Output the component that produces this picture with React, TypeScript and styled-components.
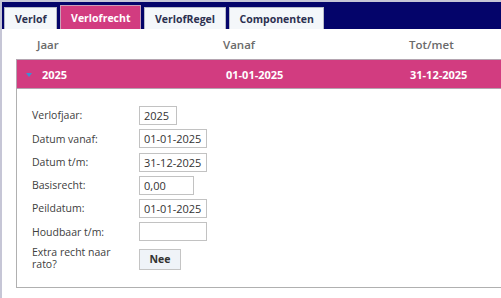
import React from "react";
import styled, { createGlobalStyle } from "styled-components";

const Global = createGlobalStyle`
  html, body { margin: 0; padding: 0; background: #ffffff; }
  body { font-family: "Open Sans", "Liberation Sans", sans-serif; }
  * { box-sizing: border-box; }
`;

const Frame = styled.div`
  width: 501px;
  height: 298px;
  border-top: 2px solid #c6c6d6;
  border-left: 2px solid #c6c6d6;
  overflow: hidden;
  background: #ffffff;
`;

const TabBar = styled.div`
  height: 27px;
  background: #04046a;
  display: flex;
  align-items: flex-end;
  gap: 3px;
  padding-left: 2px;
`;

const Tab = styled.div<{ $active?: boolean }>`
  height: ${(p) => (p.$active ? "24px" : "22px")};
  padding: 0 9.5px 0 10px;
  display: flex;
  align-items: center;
  font-size: 10.5px;
  font-weight: 700;
  color: ${(p) => (p.$active ? "#ffffff" : "#2c3050")};
  background: ${(p) => (p.$active ? "#d23c80" : "#f4f7fa")};
  border: 1px solid ${(p) => (p.$active ? "#c9a0b8" : "#b8bcc8")};
  border-bottom: none;
`;

const Content = styled.div`
  padding-left: 14px;
`;

const HeaderRow = styled.div`
  height: 30px;
  display: grid;
  grid-template-columns: 186px 186px 1fr;
  align-items: center;
  padding-left: 21px;
  font-size: 11.5px;
  font-weight: 600;
  color: #6a6a6a;
`;

const YearRow = styled.div`
  height: 30px;
  display: grid;
  grid-template-columns: 209px 184px 1fr;
  align-items: center;
  background: #d23c80;
  border: 1px solid #b4a4b0;
  border-right: none;
  font-size: 11px;
  font-weight: 700;
  color: #ffffff;
`;

const YearCell = styled.div`
  display: flex;
  align-items: center;
  gap: 10px;
  padding-left: 9px;
`;

const Caret = styled.span`
  width: 0;
  height: 0;
  border-left: 3.5px solid transparent;
  border-right: 3.5px solid transparent;
  border-top: 4px solid #3d8fd2;
  margin-top: 2px;
`;

const Panel = styled.div`
  height: 199px;
  border-left: 1px solid #b0b0b0;
  border-bottom: 1px solid #b0b0b0;
  padding: 17px 0 0 15px;
`;

const Form = styled.div`
  display: grid;
  grid-template-columns: 107px auto;
  row-gap: 4.3px;
  align-items: center;
  justify-items: start;
`;

const Label = styled.div`
  font-size: 10.5px;
  line-height: 12.5px;
  color: #404040;
  padding-right: 12px;
`;

const Field = styled.div<{ $w: number }>`
  width: ${(p) => p.$w}px;
  height: 19px;
  border: 1px solid #c2c2c2;
  padding: 0 4px;
  display: flex;
  align-items: center;
  font-size: 11px;
  color: #333333;
  background: #ffffff;
`;

const Button = styled.div`
  margin-top: 2px;
  width: 42px;
  height: 21px;
  border: 1px solid #c4c4c4;
  background: #eff3f8;
  display: flex;
  align-items: center;
  justify-content: center;
  font-size: 10.5px;
  font-weight: 700;
  color: #333333;
`;

const fields: { label: string; value: string; w: number }[] = [
  { label: "Verlofjaar:", value: "2025", w: 38 },
  { label: "Datum vanaf:", value: "01-01-2025", w: 68 },
  { label: "Datum t/m:", value: "31-12-2025", w: 68 },
  { label: "Basisrecht:", value: "0,00", w: 55 },
  { label: "Peildatum:", value: "01-01-2025", w: 68 },
  { label: "Houdbaar t/m:", value: "", w: 68 },
];

export default function App() {
  return (
    <>
      <Global />
      <Frame>
        <TabBar>
          <Tab>Verlof</Tab>
          <Tab $active>Verlofrecht</Tab>
          <Tab>VerlofRegel</Tab>
          <Tab>Componenten</Tab>
        </TabBar>
        <Content>
          <HeaderRow>
            <div>Jaar</div>
            <div>Vanaf</div>
            <div>Tot/met</div>
          </HeaderRow>
          <YearRow>
            <YearCell>
              <Caret />
              <span>2025</span>
            </YearCell>
            <div>01-01-2025</div>
            <div>31-12-2025</div>
          </YearRow>
          <Panel>
            <Form>
              {fields.map((f) => (
                <React.Fragment key={f.label}>
                  <Label>{f.label}</Label>
                  <Field $w={f.w}>{f.value}</Field>
                </React.Fragment>
              ))}
              <Label>Extra recht naar rato?</Label>
              <Button>Nee</Button>
            </Form>
          </Panel>
        </Content>
      </Frame>
    </>
  );
}
